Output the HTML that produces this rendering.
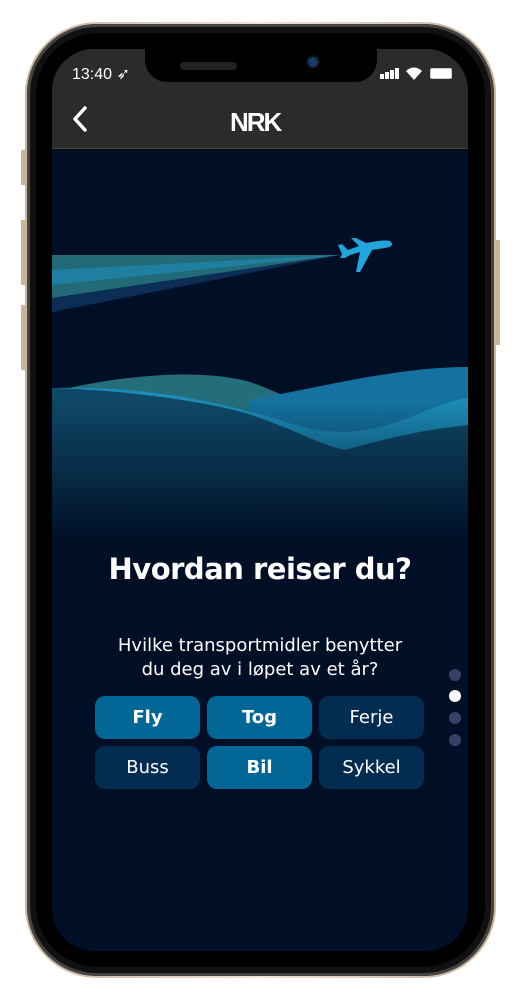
<!DOCTYPE html>
<html><head><meta charset="utf-8"><style>
html,body{margin:0;padding:0;background:#fff;width:521px;height:1000px;overflow:hidden;font-family:"Liberation Sans",sans-serif}
.a{position:absolute}
.frame{left:25px;top:22px;width:471px;height:956px;border-radius:72px;background:linear-gradient(90deg,#c9b49c,#efe3d2 50%,#c9b49c);}
.bez{left:27px;top:24px;width:467px;height:952px;border-radius:70px;background:#111;box-shadow:inset 0 0 0 3px #444}
.bez2{left:36px;top:33px;width:449px;height:934px;border-radius:62px;background:#000}
.screen{left:52px;top:49px;width:416px;height:902px;border-radius:42px;overflow:hidden;background:#000f26}
.hdr{left:0;top:0;width:416px;height:99px;background:#2b2b2b;border-bottom:1px solid #4a4236}
.notch{left:93px;top:0;width:232px;height:33px;background:#000;border-radius:0 0 22px 22px}
.btn{width:105px;height:43px;border-radius:10px;color:#fff;font-size:18px;text-align:center;line-height:43px;font-family:"DejaVu Sans","Liberation Sans",sans-serif}
.on{background:#026796;font-weight:bold}
.off{background:#042c50}
.dot{width:12px;height:12px;border-radius:6px;background:#3a3f66;left:449px}
</style></head><body>
<div class="a frame"></div>
<div class="a" style="left:21px;top:150px;width:4px;height:35px;background:#c9b49c"></div>
<div class="a" style="left:21px;top:220px;width:4px;height:65px;background:#c9b49c"></div>
<div class="a" style="left:21px;top:305px;width:4px;height:65px;background:#c9b49c"></div>
<div class="a" style="left:496px;top:240px;width:4px;height:105px;background:#c9b49c"></div>
<div class="a bez"></div>
<div class="a bez2"></div>
<div class="a screen">
 <svg class="a" style="left:0;top:0" width="416" height="902" viewBox="52 49 416 902">
  <defs>
   <linearGradient id="fade" x1="0" y1="0" x2="0" y2="1">
    <stop offset="0" stop-color="#000f26" stop-opacity="0"/>
    <stop offset="1" stop-color="#000f26" stop-opacity="1"/>
   </linearGradient>
  </defs>
  <polygon points="52,255 340,255 52,298" fill="#236a78"/>
  <polygon points="52,270 340,255 52,285" fill="#1e7fa0"/>
  <polygon points="52,298 340,255 52,312" fill="#0c2d55"/>
  <path d="M52,392 C120,375 200,368 250,382 C280,392 300,405 320,412 L468,412 L468,540 L52,540Z" fill="#236e7a"/>
  <path d="M250,400 C330,385 400,367 468,367 L468,540 L250,540Z" fill="#1572a0"/>
  <path d="M52,388 C150,385 230,405 280,420 C330,438 370,435 420,413 C440,405 455,400 468,398 L468,540 L52,540Z" fill="#1b8db8"/>
  <path d="M52,388 C120,390 200,400 245,413 C285,425 320,445 345,450 C380,440 420,430 468,425 L468,540 L52,540Z" fill="#0f4866"/>
  <rect x="52" y="400" width="416" height="142" fill="url(#fade)"/>
  <path d="M392,244 C392,240 385,240 378,241 L366,243 L356,238 L351,238 L359,246 L348,250 L342,244 L338,245 L342,254 L340,258 L345,258 L350,255 L360,252 L356,272 L360,272 L372,250 L385,248 C390,247 392,246 392,244Z" fill="#22a4dc"/>
 </svg>
 <div class="a hdr"></div>
 <div class="a notch"></div>
 <div class="a" style="left:128px;top:13px;width:57px;height:8px;border-radius:4px;background:#222"></div>
 <div class="a" style="left:256px;top:8px;width:10px;height:10px;border-radius:5px;background:#163a6a;box-shadow:0 0 0 2px #111"></div>
 <div class="a" style="left:20px;top:15px;color:#fff;font-size:16px">13:40 ➶</div>
 <div class="a" style="left:328px;top:19px;width:21px;height:11px">
  <div class="a" style="left:0;top:6px;width:4px;height:5px;background:#fff"></div>
  <div class="a" style="left:5px;top:4px;width:4px;height:7px;background:#fff"></div>
  <div class="a" style="left:10px;top:2px;width:4px;height:9px;background:#fff"></div>
  <div class="a" style="left:15px;top:0;width:4px;height:11px;background:#fff"></div>
 </div>
 <svg class="a" style="left:353px;top:17px" width="18" height="14"><path d="M1,5 A11,11 0 0 1 17,5 L9,14Z" fill="#fff"/></svg>
 <div class="a" style="left:378px;top:19px;width:20px;height:9px;border:1px solid #ccc;border-radius:2px;background:#fff"></div>
 <svg class="a" style="left:18px;top:56px" width="20" height="28"><path d="M15,3 L5,14 L15,25" stroke="#fff" stroke-width="3.5" fill="none" stroke-linecap="round" stroke-linejoin="round"/></svg>
 <div class="a" style="left:178px;top:58px;color:#fff;font-size:26px;font-weight:bold;letter-spacing:-2px;font-family:'Liberation Sans',sans-serif">NRK</div>
 <div class="a" style="left:0;top:503px;width:416px;text-align:center;color:#fff;font-size:29px;font-weight:bold;font-family:'DejaVu Sans',sans-serif;letter-spacing:-0.5px">Hvordan reiser du?</div>
 <div class="a" style="left:0;top:585px;width:416px;text-align:center;color:#fff;font-size:18px;line-height:24px;font-family:'DejaVu Sans',sans-serif">Hvilke transportmidler benytter<br>du deg av i løpet av et år?</div>
 <div class="a btn on" style="left:43px;top:647px">Fly</div>
 <div class="a btn on" style="left:155px;top:647px">Tog</div>
 <div class="a btn off" style="left:267px;top:647px">Ferje</div>
 <div class="a btn off" style="left:43px;top:697px">Buss</div>
 <div class="a btn on" style="left:155px;top:697px">Bil</div>
 <div class="a btn off" style="left:267px;top:697px">Sykkel</div>
</div>
<div class="a dot" style="top:669px"></div>
<div class="a dot" style="top:690px;background:#fff"></div>
<div class="a dot" style="top:712px"></div>
<div class="a dot" style="top:734px"></div>
</body></html>
